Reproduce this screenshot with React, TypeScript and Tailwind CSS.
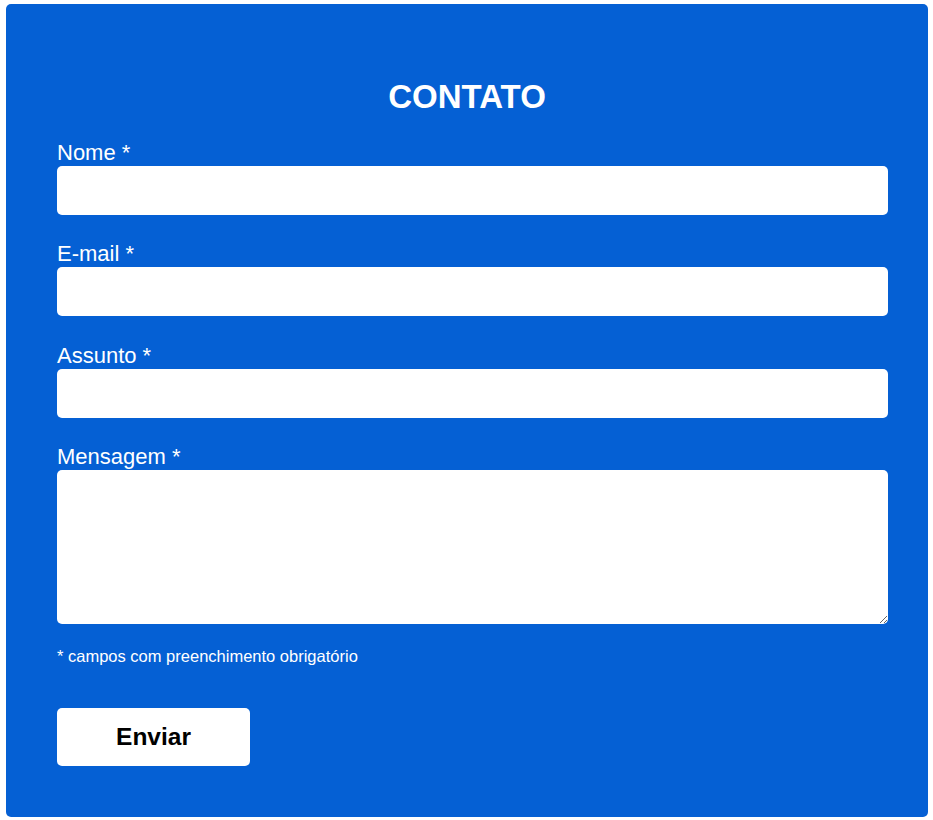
export default function App() {
  const fields = ["Nome *", "E-mail *", "Assunto *"];

  return (
    <div className="min-h-[820px] bg-white pt-[4px] pl-[6px] pr-[5px] pb-[3px] font-['Liberation_Sans',Arial,sans-serif]">
      <div className="rounded-[5px] bg-[#0560d4] pt-[74px] pb-[51px]">
        {/* Title */}
        <h2 className="text-center text-[33px] font-bold leading-[37px] text-white">CONTATO</h2>

        {/* Form */}
        <form className="mt-[25px] ml-[51px] mr-[40px]" onSubmit={(e) => e.preventDefault()}>
          {fields.map((label) => (
            <div key={label} className="mb-[26.33px]">
              <label className="block text-[22px] leading-[25px] text-white">{label}</label>
              <input
                type="text"
                className="mt-[1px] block h-[49px] w-full rounded-[5px] bg-white px-3 text-[18px] text-black outline-none"
              />
            </div>
          ))}

          <div>
            <label className="block text-[22px] leading-[25px] text-white">Mensagem *</label>
            <textarea className="mt-[1px] block h-[154px] w-full rounded-[5px] bg-white px-3 py-2 text-[18px] text-black outline-none" />
          </div>

          <p className="mt-[23px] text-[16.5px] leading-[18px] text-white">
            * campos com preenchimento obrigatório
          </p>

          <button
            type="submit"
            className="mt-[43px] h-[58px] w-[193px] rounded-[5px] bg-white text-[24.5px] font-bold text-black"
          >
            Enviar
          </button>
        </form>
      </div>
    </div>
  );
}
